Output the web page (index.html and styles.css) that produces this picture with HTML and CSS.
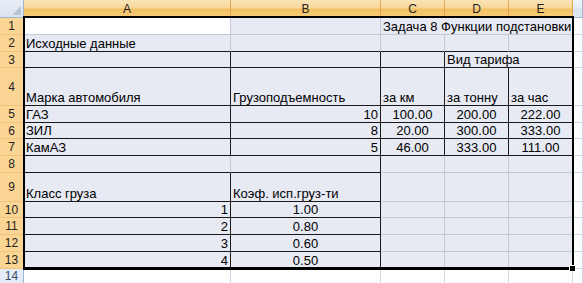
FILE: index.html
```html
<!DOCTYPE html>
<html lang="ru">
<head>
<meta charset="utf-8">
<title>Задача 8</title>
<link rel="stylesheet" href="styles.css">
</head>
<body>
<div class="sheet">
  <div class="grid">
    <!-- header row -->
    <div class="corner"><span class="tri"></span></div>
    <div class="ch">A</div><div class="ch">B</div><div class="ch">C</div><div class="ch">D</div><div class="ch">E</div><div class="ch off"></div>

    <!-- row 1 -->
    <div class="rh">1</div>
    <div class="c active"></div>
    <div class="c s"></div>
    <div class="c s span3">Задача 8 Функции подстановки</div>
    <div class="c"></div>

    <!-- row 2 -->
    <div class="rh">2</div>
    <div class="c s bB">Исходные данные</div>
    <div class="c s bB"></div>
    <div class="c s bB"></div>
    <div class="c s bB"></div>
    <div class="c s bB"></div>
    <div class="c"></div>

    <!-- row 3 -->
    <div class="rh">3</div>
    <div class="c s bR bB"></div>
    <div class="c s bR bB"></div>
    <div class="c s bR bB"></div>
    <div class="c s bR bB span2">Вид тарифа</div>
    <div class="c"></div>

    <!-- row 4 -->
    <div class="rh">4</div>
    <div class="c s bR bB">Марка автомобиля</div>
    <div class="c s bR bB">Грузоподъемность</div>
    <div class="c s bR bB">за км</div>
    <div class="c s bR bB">за тонну</div>
    <div class="c s bR bB">за час</div>
    <div class="c"></div>

    <!-- row 5 -->
    <div class="rh">5</div>
    <div class="c s bR bB">ГАЗ</div>
    <div class="c s bR bB num">10</div>
    <div class="c s bR bB ctr">100.00</div>
    <div class="c s bR bB ctr">200.00</div>
    <div class="c s bR bB ctr">222.00</div>
    <div class="c"></div>

    <!-- row 6 -->
    <div class="rh">6</div>
    <div class="c s bR bB">ЗИЛ</div>
    <div class="c s bR bB num">8</div>
    <div class="c s bR bB ctr">20.00</div>
    <div class="c s bR bB ctr">300.00</div>
    <div class="c s bR bB ctr">333.00</div>
    <div class="c"></div>

    <!-- row 7 -->
    <div class="rh">7</div>
    <div class="c s bR bB">КамАЗ</div>
    <div class="c s bR bB num">5</div>
    <div class="c s bR bB ctr">46.00</div>
    <div class="c s bR bB ctr">333.00</div>
    <div class="c s bR bB ctr">111.00</div>
    <div class="c"></div>

    <!-- row 8 -->
    <div class="rh">8</div>
    <div class="c s bB"></div>
    <div class="c s bR bB"></div>
    <div class="c s"></div>
    <div class="c s"></div>
    <div class="c s"></div>
    <div class="c"></div>

    <!-- row 9 -->
    <div class="rh">9</div>
    <div class="c s bR bB">Класс груза</div>
    <div class="c s bR bB">Коэф. исп.груз-ти</div>
    <div class="c s"></div>
    <div class="c s"></div>
    <div class="c s"></div>
    <div class="c"></div>

    <!-- row 10 -->
    <div class="rh">10</div>
    <div class="c s bR bB num">1</div>
    <div class="c s bR bB ctr">1.00</div>
    <div class="c s"></div>
    <div class="c s"></div>
    <div class="c s"></div>
    <div class="c"></div>

    <!-- row 11 -->
    <div class="rh">11</div>
    <div class="c s bR bB num">2</div>
    <div class="c s bR bB ctr">0.80</div>
    <div class="c s"></div>
    <div class="c s"></div>
    <div class="c s"></div>
    <div class="c"></div>

    <!-- row 12 -->
    <div class="rh">12</div>
    <div class="c s bR bB num">3</div>
    <div class="c s bR bB ctr">0.60</div>
    <div class="c s"></div>
    <div class="c s"></div>
    <div class="c s"></div>
    <div class="c"></div>

    <!-- row 13 -->
    <div class="rh">13</div>
    <div class="c s bR bB num">4</div>
    <div class="c s bR bB ctr">0.50</div>
    <div class="c s bB"></div>
    <div class="c s bB"></div>
    <div class="c s bB"></div>
    <div class="c"></div>

    <!-- row 14 -->
    <div class="rh off">14</div>
    <div class="c"></div>
    <div class="c"></div>
    <div class="c"></div>
    <div class="c"></div>
    <div class="c"></div>
    <div class="c"></div>
  </div>
  <div class="selbox"></div>
  <div class="handle"></div>
</div>
</body>
</html>
```

FILE: styles.css
```css
html, body {
  margin: 0;
  padding: 0;
  background: #fff;
  overflow: hidden;
}

.sheet {
  position: relative;
  width: 583px;
  height: 283px;
  font-family: "Liberation Sans", Arial, sans-serif;
  font-size: 13px;
  color: #000;
}

.grid {
  display: grid;
  grid-template-columns: 24px 207px 150px 64px 64px 64px 1fr;
  grid-template-rows: 18px 17px 17px 16px 38px 17px 16px 17px 17px 29px 16px 17px 17px 17px 1fr;
  width: 583px;
  height: 283px;
}

.grid > div {
  box-sizing: border-box;
}

.corner {
  position: relative;
  background: linear-gradient(#e9eef6, #dae3ef);
  border-right: 1px solid #9eb6ce;
  border-bottom: 1px solid #9eb6ce;
}

.tri {
  position: absolute;
  right: 2px;
  bottom: 2px;
  width: 0;
  height: 0;
  border-left: 9px solid transparent;
  border-bottom: 9px solid #b7c4d6;
}

.ch {
  display: flex;
  align-items: center;
  justify-content: center;
  font-size: 12px;
  color: #1f1f1f;
  background: linear-gradient(#fae3b5 0%, #f8d89a 45%, #f3c063 55%, #f6cd7c 100%);
  border-right: 1px solid #dfa954;
  border-bottom: 1px solid #c99a4d;
}

.ch.off {
  background: linear-gradient(#eef3fa 0%, #e4ebf5 45%, #d8e2ef 55%, #dfe7f2 100%);
  border-right: 1px solid #9eb6ce;
  border-bottom: 1px solid #9eb6ce;
}

.rh {
  display: flex;
  align-items: center;
  justify-content: center;
  font-size: 12px;
  color: #1f1f1f;
  background: #fad594;
  border-right: 1px solid #e3a94f;
  border-bottom: 1px solid #f0c47d;
}

.rh.off {
  background: #e4ecf7;
  color: #3b4d66;
  border-right: 1px solid #9eb6ce;
  border-bottom: 1px solid #c5d3e5;
}

.c {
  display: flex;
  align-items: flex-end;
  padding: 0 2px 0 2px;
  line-height: 15px;
  white-space: nowrap;
  overflow: visible;
  background: #fff;
  border-right: 1px solid #d0d7e5;
  border-bottom: 1px solid #d0d7e5;
}

.c.s {
  background: #e7e9f3;
  border-right-color: #c6c9d5;
  border-bottom-color: #c6c9d5;
}

.c.active {
  background: #fff;
  border-right-color: #c6c9d5;
  border-bottom-color: #c6c9d5;
}

.c.bR {
  border-right-color: #1a1a1a;
}

.c.bB {
  border-bottom-color: #1a1a1a;
}

.span3 {
  grid-column: span 3;
}

.span2 {
  grid-column: span 2;
}

.num {
  justify-content: flex-end;
}

.ctr {
  justify-content: center;
}

.selbox {
  position: absolute;
  left: 23px;
  top: 16px;
  width: 551px;
  height: 254px;
  box-sizing: border-box;
  border: 2px solid #000;
  border-bottom-width: 3px;
  pointer-events: none;
}

.handle {
  position: absolute;
  left: 569px;
  top: 265px;
  width: 5px;
  height: 5px;
  background: #000;
  border: 1px solid #fff;
}
```
